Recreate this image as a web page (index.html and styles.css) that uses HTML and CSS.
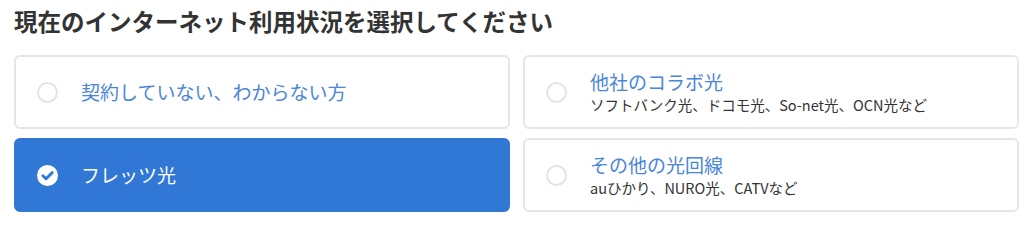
FILE: index.html
```html
<!DOCTYPE html>
<html lang="ja">
<head>
<meta charset="utf-8">
<link rel="stylesheet" href="styles.css">
</head>
<body>
<h2 class="title">現在のインターネット利用状況を選択してください</h2>
<div class="options">
  <label class="card">
    <span class="radio"></span>
    <span class="text"><span class="main">契約していない、わからない方</span></span>
  </label>
  <label class="card">
    <span class="radio"></span>
    <span class="text"><span class="main">他社のコラボ光</span><span class="sub">ソフトバンク光、ドコモ光、So-net光、OCN光など</span></span>
  </label>
  <label class="card selected">
    <span class="check"><svg viewBox="0 0 20 20" width="21" height="21"><circle cx="10" cy="10" r="10" fill="#fff"/><path d="M5.6 10.2 L8.6 13.1 L14.4 7.3" fill="none" stroke="#3177d6" stroke-width="2.8" stroke-linecap="round" stroke-linejoin="round"/></svg></span>
    <span class="text"><span class="main">フレッツ光</span></span>
  </label>
  <label class="card">
    <span class="radio"></span>
    <span class="text"><span class="main">その他の光回線</span><span class="sub">auひかり、NURO光、CATVなど</span></span>
  </label>
</div>
</body>
</html>
```
FILE: styles.css
```css
html, body {
  margin: 0;
  padding: 0;
  background: #fff;
}
body {
  padding: 4px 5px 0 14px;
  font-family: "Noto Sans CJK JP", "Noto Sans", sans-serif;
  color: #333;
}
.title {
  margin: 0;
  font-size: 23.5px;
  font-weight: 700;
  line-height: 34px;
  color: #333;
}
.options {
  margin-top: 17px;
  display: grid;
  grid-template-columns: 496px 496px;
  column-gap: 13px;
  row-gap: 9px;
}
.card {
  box-sizing: border-box;
  height: 74px;
  border: 2px solid #e6e6e6;
  border-radius: 6px;
  display: flex;
  align-items: center;
  padding-left: 21px;
  background: #fff;
}
.card.selected {
  background: #3177d6;
  border-color: #3177d6;
}
.radio {
  box-sizing: border-box;
  width: 21px;
  height: 21px;
  border: 2px solid #e4e4e4;
  border-radius: 50%;
  flex: none;
}
.check {
  width: 21px;
  height: 21px;
  flex: none;
  display: block;
}
.check svg { display: block; }
.text {
  margin-left: 23px;
  display: flex;
  flex-direction: column;
}
.main {
  font-size: 19px;
  line-height: 26px;
  color: #4a86d9;
}
.selected .main {
  color: #fff;
}
.sub {
  font-size: 14.5px;
  line-height: 20px;
  color: #333;
}
```
